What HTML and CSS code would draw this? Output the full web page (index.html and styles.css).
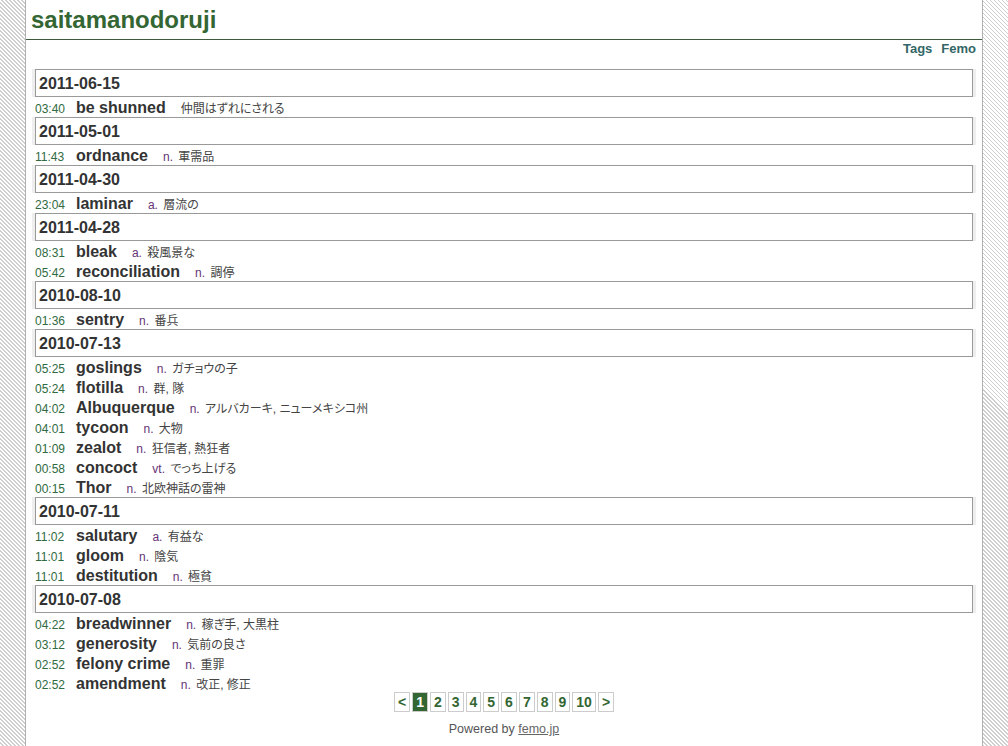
FILE: index.html
```html
<!DOCTYPE html>
<html lang="ja">
<head>
<meta charset="utf-8">
<title>saitamanodoruji</title>
<link rel="stylesheet" href="styles.css">
</head>
<body>
<div class="page">
  <h1 class="site-title">saitamanodoruji</h1>
  <nav class="nav"><a href="#">Tags</a><a href="#">Femo</a></nav>
  <main class="days">
    <section class="day">
      <h2 class="day-head"><span>2011-06-15</span></h2>
      <ul class="entries">
        <li><span class="time">03:40</span><span class="word">be shunned</span><span class="def">仲間はずれにされる</span></li>
      </ul>
    </section>
    <section class="day">
      <h2 class="day-head"><span>2011-05-01</span></h2>
      <ul class="entries">
        <li><span class="time">11:43</span><span class="word">ordnance</span><span class="def"><span class="pos">n.</span> 軍需品</span></li>
      </ul>
    </section>
    <section class="day">
      <h2 class="day-head"><span>2011-04-30</span></h2>
      <ul class="entries">
        <li><span class="time">23:04</span><span class="word">laminar</span><span class="def"><span class="pos">a.</span> 層流の</span></li>
      </ul>
    </section>
    <section class="day">
      <h2 class="day-head"><span>2011-04-28</span></h2>
      <ul class="entries">
        <li><span class="time">08:31</span><span class="word">bleak</span><span class="def"><span class="pos">a.</span> 殺風景な</span></li>
        <li><span class="time">05:42</span><span class="word">reconciliation</span><span class="def"><span class="pos">n.</span> 調停</span></li>
      </ul>
    </section>
    <section class="day">
      <h2 class="day-head"><span>2010-08-10</span></h2>
      <ul class="entries">
        <li><span class="time">01:36</span><span class="word">sentry</span><span class="def"><span class="pos">n.</span> 番兵</span></li>
      </ul>
    </section>
    <section class="day">
      <h2 class="day-head"><span>2010-07-13</span></h2>
      <ul class="entries">
        <li><span class="time">05:25</span><span class="word">goslings</span><span class="def"><span class="pos">n.</span> ガチョウの子</span></li>
        <li><span class="time">05:24</span><span class="word">flotilla</span><span class="def"><span class="pos">n.</span> 群, 隊</span></li>
        <li><span class="time">04:02</span><span class="word">Albuquerque</span><span class="def"><span class="pos">n.</span> アルバカーキ, ニューメキシコ州</span></li>
        <li><span class="time">04:01</span><span class="word">tycoon</span><span class="def"><span class="pos">n.</span> 大物</span></li>
        <li><span class="time">01:09</span><span class="word">zealot</span><span class="def"><span class="pos">n.</span> 狂信者, 熱狂者</span></li>
        <li><span class="time">00:58</span><span class="word">concoct</span><span class="def"><span class="pos">vt.</span> でっち上げる</span></li>
        <li><span class="time">00:15</span><span class="word">Thor</span><span class="def"><span class="pos">n.</span> 北欧神話の雷神</span></li>
      </ul>
    </section>
    <section class="day">
      <h2 class="day-head"><span>2010-07-11</span></h2>
      <ul class="entries">
        <li><span class="time">11:02</span><span class="word">salutary</span><span class="def"><span class="pos">a.</span> 有益な</span></li>
        <li><span class="time">11:01</span><span class="word">gloom</span><span class="def"><span class="pos">n.</span> 陰気</span></li>
        <li><span class="time">11:01</span><span class="word">destitution</span><span class="def"><span class="pos">n.</span> 極貧</span></li>
      </ul>
    </section>
    <section class="day">
      <h2 class="day-head"><span>2010-07-08</span></h2>
      <ul class="entries">
        <li><span class="time">04:22</span><span class="word">breadwinner</span><span class="def"><span class="pos">n.</span> 稼ぎ手, 大黒柱</span></li>
        <li><span class="time">03:12</span><span class="word">generosity</span><span class="def"><span class="pos">n.</span> 気前の良さ</span></li>
        <li><span class="time">02:52</span><span class="word">felony crime</span><span class="def"><span class="pos">n.</span> 重罪</span></li>
        <li><span class="time">02:52</span><span class="word">amendment</span><span class="def"><span class="pos">n.</span> 改正, 修正</span></li>
      </ul>
    </section>
  </main>
  <div class="pager">
    <a href="#">&lt;</a><a href="#" class="current">1</a><a href="#">2</a><a href="#">3</a><a href="#">4</a><a href="#">5</a><a href="#">6</a><a href="#">7</a><a href="#">8</a><a href="#">9</a><a href="#">10</a><a href="#">&gt;</a>
  </div>
  <footer class="footer">Powered by <a href="#">femo.jp</a></footer>
</div>
</body>
</html>
```

FILE: styles.css
```css
html, body {
  margin: 0;
  padding: 0;
}
body {
  font-family: "Liberation Sans", Arial, "Noto Sans CJK JP", sans-serif;
  color: #333;
  background-color: #fff;
  background-image: repeating-linear-gradient(45deg, #fff 0, #fff 1.6px, #cfcfcf 1.6px, #cfcfcf 2.83px);
}
.page {
  width: 956px;
  margin: 0 auto;
  min-height: 100vh;
  background: #fff;
  border-left: 1px solid #b0b0b0;
  border-right: 1px solid #b0b0b0;
  box-sizing: content-box;
}
.site-title {
  margin: 0;
  padding: 6px 5px 5px;
  font-size: 24px;
  line-height: 28px;
  font-weight: bold;
  color: #336633;
  border-bottom: 1px solid #3d5a3d;
}
.nav {
  display: flex;
  justify-content: flex-end;
  gap: 9px;
  padding: 1px 6px 0;
  line-height: 16px;
  font-size: 13px;
  font-weight: bold;
}
.nav a {
  color: #336666;
  text-decoration: none;
}
.days {
  margin-top: 12px;
  padding: 0 6px;
}
.day-head {
  margin: 0;
  padding: 0 3px;
  background: #eeeeee;
  font-size: 16px;
  font-weight: bold;
  color: #333;
}
.day-head span {
  display: block;
  border: 1px solid #999;
  background: #fff;
  padding-left: 3px;
  line-height: 26px;
  padding-top: 1px;
  height: 25px;
}
.entries {
  list-style: none;
  margin: 0;
  padding: 0 0 0 3px;
}
.entries li {
  height: 20px;
  line-height: 22px;
  white-space: nowrap;
}
.time {
  display: inline-block;
  width: 41px;
  font-size: 12px;
  color: #2f6a42;
}
.word {
  font-size: 16px;
  font-weight: bold;
  color: #333;
}
.def {
  margin-left: 15px;
  font-size: 12px;
  color: #444;
  font-feature-settings: "palt";
}
.pos {
  color: #663377;
  margin-right: 2px;
}
.pager {
  display: flex;
  justify-content: center;
  gap: 2px;
  margin-top: -1px;
}
.pager a {
  display: block;
  border: 1px solid #ccc;
  padding: 0 3px;
  line-height: 18px;
  font-size: 14px;
  font-weight: bold;
  color: #336633;
  text-decoration: none;
  background: #fff;
}
.pager a.current {
  background: #336633;
  color: #fff;
}
.footer {
  margin-top: 8px;
  text-align: center;
  font-size: 12.5px;
  line-height: 18px;
  color: #555;
}
.footer a {
  color: #666;
  text-decoration: underline;
}
```
